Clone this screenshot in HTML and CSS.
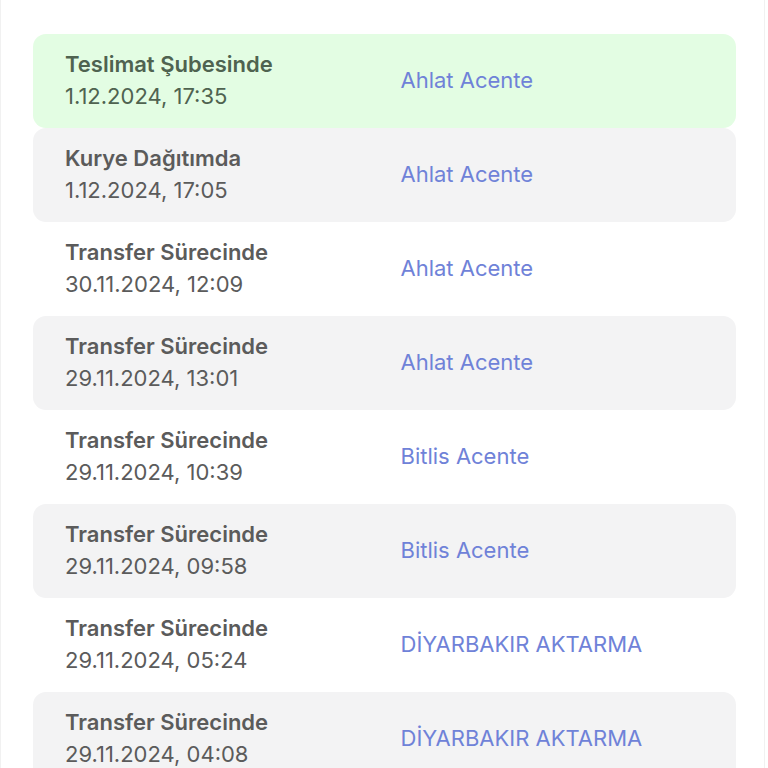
FILE: index.html
```html
<!DOCTYPE html>
<html lang="tr">

<head>
	<meta charset="utf-8">
	<title>Kargo Hareketleri</title>
	<meta name="viewport" content="width=device-width, initial-scale=1">
	<link rel="stylesheet" href="styles.css">
</head>

<body>
	<main class="page">
		<ol class="moves">
			<li class="move is-current">
				<div class="when">
					<b>Teslimat Şubesinde</b>
					<span>1.12.2024, 17:35</span>
				</div>
				<span class="where">Ahlat Acente</span>
			</li>
			<li class="move">
				<div class="when">
					<b>Kurye Dağıtımda</b>
					<span>1.12.2024, 17:05</span>
				</div>
				<span class="where">Ahlat Acente</span>
			</li>
			<li class="move">
				<div class="when">
					<b>Transfer Sürecinde</b>
					<span>30.11.2024, 12:09</span>
				</div>
				<span class="where">Ahlat Acente</span>
			</li>
			<li class="move">
				<div class="when">
					<b>Transfer Sürecinde</b>
					<span>29.11.2024, 13:01</span>
				</div>
				<span class="where">Ahlat Acente</span>
			</li>
			<li class="move">
				<div class="when">
					<b>Transfer Sürecinde</b>
					<span>29.11.2024, 10:39</span>
				</div>
				<span class="where">Bitlis Acente</span>
			</li>
			<li class="move">
				<div class="when">
					<b>Transfer Sürecinde</b>
					<span>29.11.2024, 09:58</span>
				</div>
				<span class="where">Bitlis Acente</span>
			</li>
			<li class="move">
				<div class="when">
					<b>Transfer Sürecinde</b>
					<span>29.11.2024, 05:24</span>
				</div>
				<span class="where">DİYARBAKIR AKTARMA</span>
			</li>
			<li class="move">
				<div class="when">
					<b>Transfer Sürecinde</b>
					<span>29.11.2024, 04:08</span>
				</div>
				<span class="where">DİYARBAKIR AKTARMA</span>
			</li>
		</ol>
	</main>
</body>

</html>
```

FILE: styles.css
```css
*,
*::before,
*::after {
	box-sizing: border-box;
}

:root {
	--spacing: 32px;
	--row-gray: #f3f3f4;
	--row-green: #e3fde3;
	--ink: #5b5b5b;
	--link: #6f82d8;
}

body {
	margin: 0;
	font-family: Inter, "Noto Sans", sans-serif;
	font-size: 22px;
	line-height: 32px;
	color: var(--ink);
	background: #fff;
	overflow: hidden;
}

.page {
	width: 765px;
	height: 768px;
	padding: 34px 0 0 var(--spacing);
	border-inline: 1px solid #f1f1f1;
}

.moves {
	list-style-type: none;
	margin: 0;
	padding: 0;
	width: 703px;
}

.move {
	display: grid;
	grid-template-columns: 1fr 1fr;
	gap: var(--spacing);
	align-items: center;
	height: 94px;
	padding: 14px var(--spacing) 16px;
	border-radius: 13px;

	&:nth-child(even) {
		background-color: var(--row-gray);
	}

	&.is-current {
		background-color: var(--row-green);
		color: #4f6350;
	}
}

.when {
	display: flex;
	flex-direction: column;

	b {
		font-weight: 600;
	}
}

.where {
	color: var(--link);
}
```
